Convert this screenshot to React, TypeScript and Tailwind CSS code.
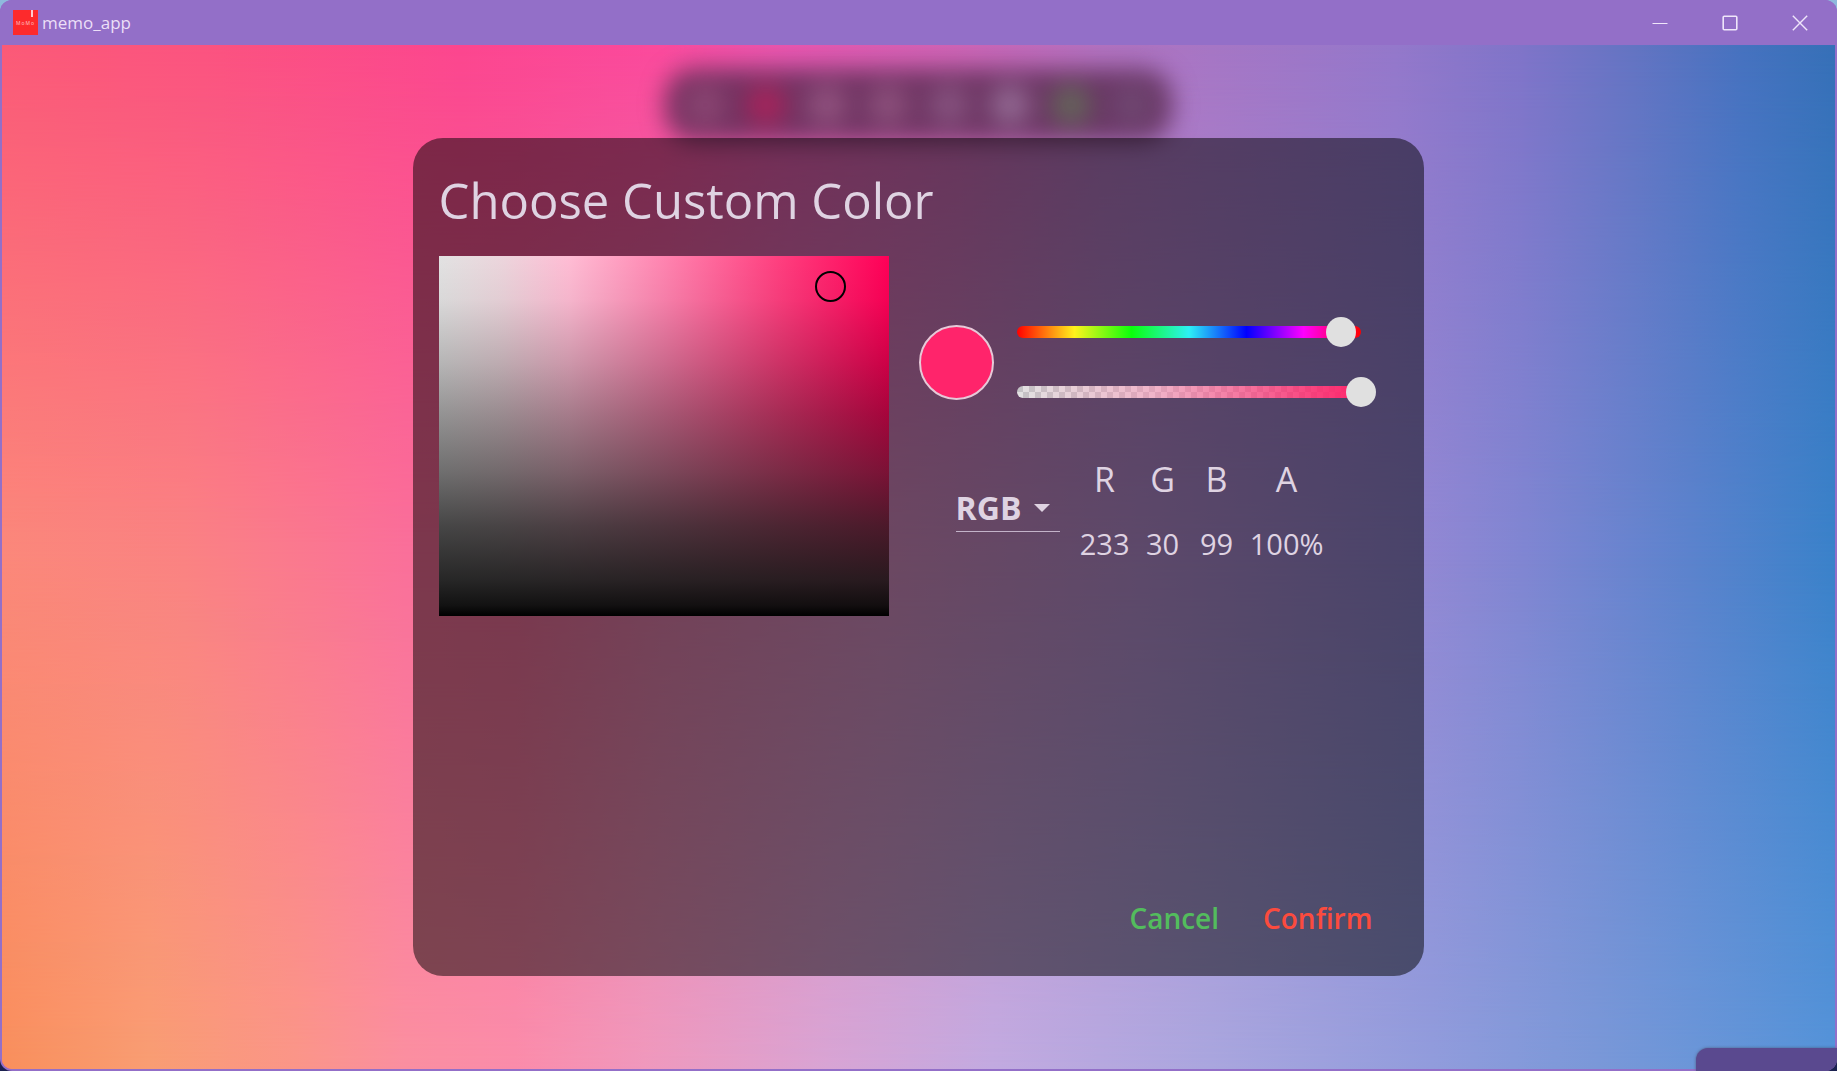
import { useState } from 'react';

const toolbarSpots = [
  'bg-[#9c5580]/60',
  'bg-[#b5205a]/80',
  'bg-[#a0608c]/70',
  'bg-[#9a5c88]/70',
  'bg-[#92608c]/70',
  'bg-[#986f98]/90',
  'bg-[#647058]/80',
  'bg-[#75547c]/60',
];

const channels = [
  { name: 'R', value: '233', width: 'w-[66px]' },
  { name: 'G', value: '30', width: 'w-[50px]' },
  { name: 'B', value: '99', width: 'w-[58px]' },
  { name: 'A', value: '100%', width: 'w-[82px]' },
];

const sliderClass =
  'relative block h-[30px] w-full cursor-pointer appearance-none bg-transparent outline-none [&::-webkit-slider-runnable-track]:h-[30px] [&::-webkit-slider-thumb]:h-[30px] [&::-webkit-slider-thumb]:w-[30px] [&::-webkit-slider-thumb]:appearance-none [&::-webkit-slider-thumb]:rounded-full [&::-webkit-slider-thumb]:bg-[#e0e0e0]';

function TitleBar() {
  return (
    <header className="flex h-[45px] shrink-0 items-center bg-[#936fc8] pr-0.5 pl-[13px]">
      <svg viewBox="0 0 25 25" className="mr-1 h-[25px] w-[25px]" aria-hidden="true">
        <rect width="25" height="25" fill="#fd2a2c" />
        <rect x="18" y="0" width="2" height="7" fill="#ffc9cc" />
        <text x="12.5" y="14.5" fontSize="5" letterSpacing="1" textAnchor="middle" fill="#ffc4c4" fontFamily="Open Sans">
          MoMo
        </text>
      </svg>
      <span className="flex-1 text-[17px] text-[#ecdff7]">memo_app</span>
      <button type="button" aria-label="Minimize" className="flex h-full w-[70px] items-center justify-center">
        <svg viewBox="0 0 16 16" className="h-4 w-4" fill="none" stroke="#efe6fa">
          <path d="M0.5 8.5H15.5" />
        </svg>
      </button>
      <button type="button" aria-label="Maximize" className="flex h-full w-[70px] items-center justify-center">
        <svg viewBox="0 0 16 16" className="h-4 w-4" fill="none" stroke="#efe6fa" strokeWidth="1.6">
          <rect x="1.2" y="1.2" width="13.6" height="13.6" rx="1" />
        </svg>
      </button>
      <button type="button" aria-label="Close" className="flex h-full w-[70px] items-center justify-center">
        <svg viewBox="0 0 16 16" className="h-4 w-4" fill="none" stroke="#efe6fa" strokeWidth="1.4">
          <path d="M0.8 0.8L15.2 15.2M15.2 0.8L0.8 15.2" />
        </svg>
      </button>
    </header>
  );
}

function Backdrop() {
  return (
    <div className="absolute inset-0" aria-hidden="true">
      <div className="absolute inset-0 bg-[linear-gradient(to_right,#fb5a78_0%,#fb5380_11%,#fc468f_25%,#fb4a9d_36%,#e856b0_43%,#cf64b6_52%,#b272c0_60%,#a676c5_66%,#9478cb_76%,#7f74c9_83%,#6474c3_89%,#4672c0_95%,#3670b8_100%)]" />
      <div className="absolute inset-0 bg-[linear-gradient(to_right,#fb887a_0%,#fa8383_10%,#fa709a_22%,#f4709c_28%,#e682b0_36%,#d890c4_48%,#ba92d4_62%,#9488d4_77%,#8086d2_83%,#5c83cd_92%,#3a82ca_100%)] [mask-image:linear-gradient(to_bottom,transparent,black_50%)]" />
      <div className="absolute inset-0 bg-[linear-gradient(to_right,#f98f5c_0%,#f99d72_8%,#fb9688_16%,#fb8fa0_22%,#fb8caa_28%,#f098bc_35%,#d8a4d4_45%,#c2aae0_54%,#a9a6de_66%,#919cdc_78%,#7a98d8_87%,#5593d9_100%)] [mask-image:linear-gradient(to_bottom,transparent_50%,black)]" />
    </div>
  );
}

function BlurredToolbar() {
  return (
    <div className="absolute inset-x-0 top-6 flex justify-center blur-[12px]" aria-hidden="true">
      <div className="flex h-[72px] items-center gap-[21px] rounded-[30px] bg-[#5c2c54]/85 px-5">
        {toolbarSpots.map((color) => (
          <span key={color} className={`h-10 w-10 rounded-full ${color}`} />
        ))}
      </div>
    </div>
  );
}

function ColorField() {
  return (
    <div className="relative h-[360px] w-[450px] shrink-0 bg-[linear-gradient(to_right,#e2e2e2_0%,#ecd5dc_14%,#ffbcd4_29%,#ff84b0_50%,#ff4080_75%,#ff0057_100%)]">
      <div className="h-full bg-[linear-gradient(to_bottom,transparent_0%,rgb(0_0_0/0.04)_12%,rgb(0_0_0/0.2)_30%,rgb(12_12_12/0.37)_44%,rgb(30_30_30/0.59)_60%,rgb(31_31_31/0.8)_75%,rgb(27_27_27/0.94)_90%,rgb(14_14_14/0.98)_97%,black_100%)]" />
      <span className="absolute top-[4.2%] left-[83.6%] h-[31px] w-[31px] rounded-full border-2 border-black" />
    </div>
  );
}

export default function App() {
  const [hue, setHue] = useState(340);
  const [alpha, setAlpha] = useState(100);

  return (
    <div className="h-screen bg-[linear-gradient(to_bottom,#8fb9dd,#1b2150)] font-['Open_Sans','Noto_Sans',sans-serif]">
      <div className="relative flex h-full flex-col overflow-hidden rounded-xl bg-[#936fc8]">
        <TitleBar />
        <main className="relative mx-0.5 mb-0.5 flex min-h-0 flex-1 items-center justify-center overflow-hidden rounded-b-[10px]">
          <Backdrop />
          <BlurredToolbar />
          <section
            role="dialog"
            aria-labelledby="dialog-title"
            className="relative flex h-[81.8%] w-[55.2%] min-w-[990px] flex-col rounded-[30px] bg-black/50 p-[26px] text-[#dfd3e2]"
          >
            <h1 id="dialog-title" className="mb-5 text-[49px] leading-[72px]">
              Choose Custom Color
            </h1>
            <div className="flex flex-1 gap-[30px]">
              <ColorField />
              <div className="pt-[46px]">
                <div className="flex items-center gap-2">
                  <span className="h-[75px] w-[75px] shrink-0 rounded-full border-2 border-[#e6c9d8] bg-[#ff246b]" />
                  <div className="w-[374px]">
                    <div className="relative flex h-[60px] items-center">
                      <div className="absolute inset-x-[15px] h-3 rounded-full bg-[linear-gradient(to_right,#f00_0%,#fff21c_16.7%,#0bff0b_33.3%,#2df0f5_50%,#00f_66.7%,#f0f_83.3%,#f00_100%)]" />
                      <input
                        type="range"
                        aria-label="Hue"
                        min={0}
                        max={360}
                        value={hue}
                        onChange={(e) => setHue(Number(e.target.value))}
                        className={sliderClass}
                      />
                    </div>
                    <div className="relative flex h-[60px] items-center">
                      <div className="absolute inset-x-[15px] h-3 overflow-hidden rounded-full bg-[conic-gradient(#e2e2e2_25%,#c4c4c6_0_50%,#e2e2e2_0_75%,#c4c4c6_0)] bg-[length:12px_12px]">
                        <div className="h-full bg-[linear-gradient(to_right,#ff246b00,#ff86b080_40%,#ff246bc0_80%,#ff246b)]" />
                      </div>
                      <input
                        type="range"
                        aria-label="Opacity"
                        min={0}
                        max={100}
                        value={alpha}
                        onChange={(e) => setAlpha(Number(e.target.value))}
                        className={sliderClass}
                      />
                    </div>
                  </div>
                </div>
                <div className="mt-6 ml-[37px] flex items-center gap-3">
                  <div className="relative mb-1.5">
                    <select
                      aria-label="Color model"
                      defaultValue="RGB"
                      className="h-12 w-[104px] appearance-none border-b border-[#c3b3c9] bg-transparent text-[32px] leading-[46px] font-bold"
                    >
                      <option>RGB</option>
                      <option>HSV</option>
                      <option>HSL</option>
                    </select>
                    <svg viewBox="0 0 16 8" className="pointer-events-none absolute top-5 right-2.5 h-2 w-4" fill="#dfd3e2">
                      <path d="M0 0H16L8 8Z" />
                    </svg>
                  </div>
                  <table className="table-fixed text-center">
                    <thead>
                      <tr className="h-[65px] text-[34px] leading-[50px]">
                        {channels.map((c) => (
                          <th key={c.name} scope="col" className={`p-0 text-center font-normal ${c.width}`}>
                            {c.name}
                          </th>
                        ))}
                      </tr>
                    </thead>
                    <tbody>
                      <tr className="h-[65px] text-[29px] leading-[50px]">
                        {channels.map((c) => (
                          <td key={c.name} className="p-0">
                            {c.value}
                          </td>
                        ))}
                      </tr>
                    </tbody>
                  </table>
                </div>
              </div>
            </div>
            <div className="mb-2 flex justify-end gap-11 pr-[26px] text-[28px] leading-[48px] font-semibold">
              <button type="button" className="text-[#53bc5d]">
                Cancel
              </button>
              <button type="button" className="text-[#fb4b3e]">
                Confirm
              </button>
            </div>
          </section>
        </main>
        <div className="absolute right-0 bottom-0 h-[23px] w-[141px] rounded-tl-xl bg-[#5a498f] shadow-[0_0_3px_rgb(70_70_90/0.7)]" aria-hidden="true" />
      </div>
    </div>
  );
}
